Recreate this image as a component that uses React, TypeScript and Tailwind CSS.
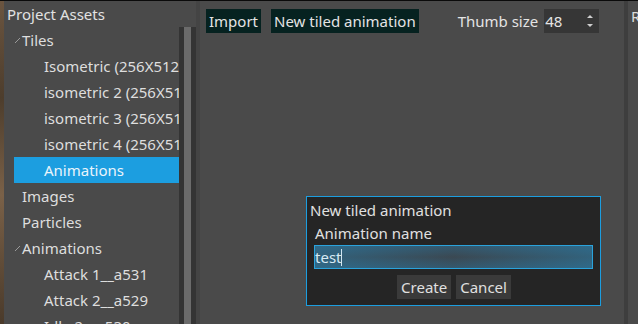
import React from "react";

const font = { fontFamily: '"Noto Sans", "Open Sans", sans-serif' };

function Arrow() {
  return (
    <svg width="8" height="8" viewBox="0 0 8 8" className="shrink-0">
      <line x1="1" y1="7" x2="6" y2="2" stroke="#9a9a9a" strokeWidth="1" />
    </svg>
  );
}

function Row({
  text,
  level,
  arrow,
  selected,
}: {
  text: string;
  level: number;
  arrow?: boolean;
  selected?: boolean;
}) {
  return (
    <div
      className={
        "h-[26px] flex items-center whitespace-nowrap overflow-hidden ml-[10px] " +
        (selected ? "bg-[#1c9ee0] text-[#eaf4fb]" : "text-[#dedede]")
      }
    >
      {level === 0 ? (
        <div className="flex items-center">
          <div className="w-[8px] flex items-center">{arrow ? <Arrow /> : null}</div>
          <span>{text}</span>
        </div>
      ) : (
        <span className="pl-[30px]">{text}</span>
      )}
    </div>
  );
}

export default function App() {
  return (
    <div
      className="w-[638px] h-[324px] overflow-hidden flex flex-col bg-black text-[15px] leading-none whitespace-nowrap"
      style={font}
    >
      <div className="h-[1px] bg-[#0a0a0a]" />
      <div className="flex-1 flex min-h-0">
        <div className="w-[4px] shrink-0 bg-[linear-gradient(180deg,#6b5540,#4d3d2c_30%,#7a6148_60%,#4a3a2a)]" />
        {/* Left panel */}
        <div className="w-[192px] shrink-0 bg-[#4a4a4a] flex flex-col">
          <div className="h-[26px] flex items-center pl-[3px] text-[#e2e2e2] shrink-0">
            Project Assets
          </div>
          <div className="flex-1 flex min-h-0">
            <div className="flex-1 overflow-hidden">
              <Row text="Tiles" level={0} arrow />
              <Row text="Isometric (256X512)" level={1} />
              <Row text="isometric 2 (256X512)" level={1} />
              <Row text="isometric 3 (256X512)" level={1} />
              <Row text="isometric 4 (256X512)" level={1} />
              <Row text="Animations" level={1} selected />
              <Row text="Images" level={0} />
              <Row text="Particles" level={0} />
              <Row text="Animations" level={0} arrow />
              <Row text="Attack 1__a531" level={1} />
              <Row text="Attack 2__a529" level={1} />
              <Row text="Idle 2__a530" level={1} />
            </div>
            <div className="w-[17px] shrink-0 bg-[#343434] flex justify-center">
              <div className="w-[7px] bg-[#6b6b6b]" />
            </div>
          </div>
        </div>
        <div className="w-[4px] shrink-0 bg-[#444444]" />
        {/* Main area */}
        <div className="w-[424px] shrink-0 bg-[#4a4a4a] relative">
          <div className="flex items-center h-[24px] mt-[8px] ml-[6px] text-[#e4e4e4]">
            <div className="h-[24px] px-[3px] flex items-center bg-[#062220]">Import</div>
            <div className="h-[24px] px-[3px] flex items-center bg-[#062220] ml-[10px]">
              New tiled animation
            </div>
            <div className="ml-[39px]">Thumb size</div>
            <div className="ml-[6px] w-[55px] h-[24px] bg-[#363636] flex items-center pl-[1px] relative">
              48
              <svg width="8" height="16" viewBox="0 0 8 16" className="absolute right-[5px] top-[4px]">
                <path d="M4 2 L7 5 L1 5 Z" fill="#cfcfcf" />
                <path d="M4 14 L7 11 L1 11 Z" fill="#cfcfcf" />
              </svg>
            </div>
          </div>
          {/* Dialog */}
          <div className="absolute left-[106px] top-[195px] w-[295px] h-[110px] bg-[#252525] border border-[#1c9ee0] flex flex-col text-[#e0e0e0]">
            <div className="h-[24px] flex items-center pl-[3px] pt-[2px]">New tiled animation</div>
            <div className="h-[24px] flex items-center pl-[8px]">Animation name</div>
            <div className="mx-[7px] h-[24px] border border-[#2aa3dc] bg-[linear-gradient(180deg,#2f6584,#3a4a55_50%,#2f6584)] flex items-center">
              <div className="flex-1 h-full flex items-center bg-[linear-gradient(90deg,rgba(47,108,140,0.7),rgba(60,70,78,0.4)_50%,rgba(47,108,140,0.7))]">
                <span className="text-[#d6eaf5]">test</span>
                <span className="w-[1px] h-[17px] bg-[#d0e6f2]" />
              </div>
            </div>
            <div className="flex justify-center gap-[5px] mt-[6px] pl-[1px]">
              <div className="h-[24px] px-[4px] flex items-center bg-[#3a3a3a]">Create</div>
              <div className="h-[24px] px-[4px] flex items-center bg-[#3a3a3a]">Cancel</div>
            </div>
          </div>
        </div>
        <div className="w-[4px] shrink-0 bg-[#3e3e3e]" />
        <div className="flex-1 min-w-0 bg-[#4a4a4a] pl-[3px] pt-[8px] text-[#dcdcdc] overflow-hidden">
          Resources
        </div>
      </div>
    </div>
  );
}
